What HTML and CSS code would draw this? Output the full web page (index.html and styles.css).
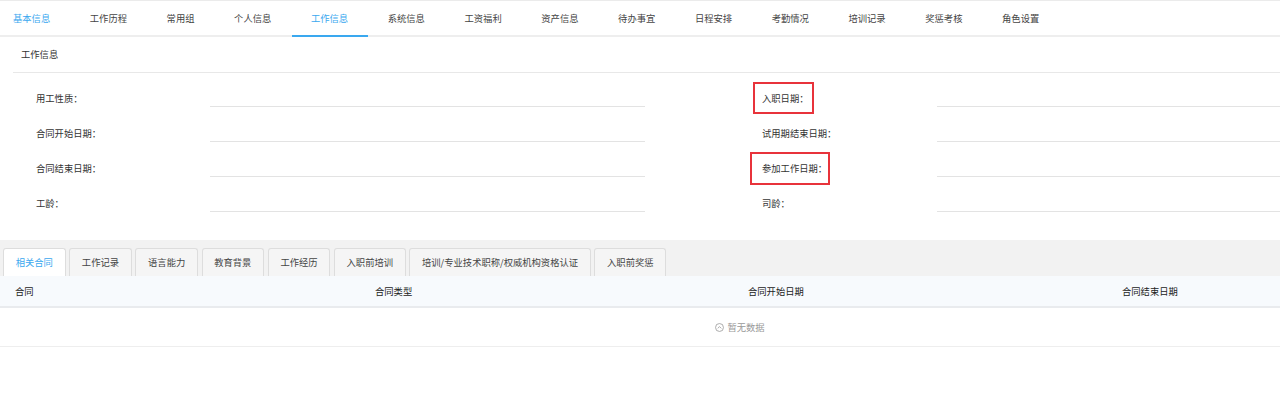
FILE: index.html
```html
<!DOCTYPE html>
<html><head>
<meta charset="utf-8">
<title>工作信息</title>
<link rel="stylesheet" href="styles.css">
</head>
<body>
<div class="topbar">
	<div class="navtab first blue">基本信息</div>
	<div class="navtab">工作历程</div>
	<div class="navtab">常用组</div>
	<div class="navtab">个人信息</div>
	<div class="navtab active">工作信息</div>
	<div class="navtab">系统信息</div>
	<div class="navtab">工资福利</div>
	<div class="navtab">资产信息</div>
	<div class="navtab">待办事宜</div>
	<div class="navtab">日程安排</div>
	<div class="navtab">考勤情况</div>
	<div class="navtab">培训记录</div>
	<div class="navtab">奖惩考核</div>
	<div class="navtab">角色设置</div>
</div>

<div class="sectionHead">工作信息</div>

<div class="form">
	<div class="row">
		<div class="item left"><span class="label">用工性质：</span><span class="value"></span></div>
		<div class="item"><span class="label"><span class="mark m1">入职日期：</span></span><span class="value"></span></div>
	</div>
	<div class="row">
		<div class="item left"><span class="label">合同开始日期：</span><span class="value"></span></div>
		<div class="item"><span class="label">试用期结束日期：</span><span class="value"></span></div>
	</div>
	<div class="row">
		<div class="item left"><span class="label">合同结束日期：</span><span class="value"></span></div>
		<div class="item"><span class="label"><span class="mark m2">参加工作日期：</span></span><span class="value"></span></div>
	</div>
	<div class="row">
		<div class="item left"><span class="label">工龄：</span><span class="value"></span></div>
		<div class="item"><span class="label">司龄：</span><span class="value"></span></div>
	</div>
</div>

<div class="cardTabs">
	<div class="card on">相关合同</div>
	<div class="card">工作记录</div>
	<div class="card">语言能力</div>
	<div class="card">教育背景</div>
	<div class="card">工作经历</div>
	<div class="card">入职前培训</div>
	<div class="card">培训/专业技术职称/权威机构资格认证</div>
	<div class="card">入职前奖惩</div>
</div>

<div class="thead">
	<div class="th c1">合同</div>
	<div class="th c2">合同类型</div>
	<div class="th c3">合同开始日期</div>
	<div class="th c4">合同结束日期</div>
</div>
<div class="empty">
	<svg width="9" height="9" viewBox="0 0 10 10"><circle cx="5" cy="5" r="4.4" fill="none" stroke="#9a9a9a" stroke-width="0.9"/><path d="M3 6 L5 4 L7 6" fill="none" stroke="#9a9a9a" stroke-width="0.9"/></svg>
	<span>暂无数据</span>
</div>
</body>
</html>
```

FILE: styles.css
```css
body {
	margin: 0;
	font-family: "Noto Sans CJK SC", "Liberation Sans", sans-serif;
	font-size: 9.3px;
	color: #333;
	background: #fff;
}

/* верхние вкладки */
.topbar {
	display: flex;
	padding-left: 13px;
	border-top: 1px solid #ebebeb;
	border-bottom: 2px solid #eeeeee;
}
.navtab {
	position: relative;
	height: 34px;
	line-height: 34px;
	padding: 0 19.8px;
	color: #444;
	white-space: nowrap;
}
.navtab.first { padding-left: 0; }
.navtab.blue, .navtab.active { color: #3aa8ef; }
.navtab.active::after {
	content: "";
	position: absolute;
	left: 1px; right: 0; bottom: -2px;
	height: 2px;
	background: #3aa8ef;
}

.sectionHead {
	margin-left: 13px;
	padding-left: 8px;
	height: 35px;
	line-height: 35px;
	border-bottom: 1px solid #e8e8e8;
	color: #333;
}

/* форма */
.form {
	padding-left: 36px;
	margin-bottom: 27px;
}
.row { display: flex; height: 35px; }
.item { display: flex; align-items: flex-end; flex: 1; }
.item.left { flex: none; width: 609px; margin-right: 117px; }
.label {
	flex: none;
	width: 175px;
	line-height: 12px;
	padding-bottom: 4px;
	white-space: nowrap;
}
.item.left .label { width: 174px; }
.value {
	flex: 1;
	align-self: stretch;
	border-bottom: 1px solid #e3e3e3;
	margin-bottom: 1px;
}
.mark { position: relative; }
.mark::after {
	content: "";
	position: absolute;
	border: 2px solid #e8333b;
}
.m1::after { left: -9px; right: -5px; top: -9px; bottom: -9px; }
.m2::after { left: -12px; right: -3px; top: -9px; bottom: -10px; }

/* нижние вкладки */
.cardTabs {
	display: flex;
	gap: 3.6px;
	background: #f2f2f2;
	padding: 8px 0 0 3px;
}
.card {
	height: 27px;
	line-height: 27px;
	padding: 0 11.7px;
	border: 1px solid #dddddd;
	border-bottom: none;
	border-radius: 3px 3px 0 0;
	background: #f5f5f5;
	color: #444;
	white-space: nowrap;
}
.card.on { background: #fff; color: #3aa8ef; }

.thead {
	display: grid;
	grid-template-columns: 360px 373px 374px 1fr;
	padding-left: 15px;
	height: 30px;
	line-height: 30px;
	background: #f7fafd;
	border-bottom: 2px solid #e9ebee;
	color: #222;
}

.empty {
	display: flex;
	align-items: center;
	justify-content: center;
	gap: 3px;
	height: 38px;
	padding-left: 200px;
	border-bottom: 1px solid #eeeeee;
	color: #999;
}
```
